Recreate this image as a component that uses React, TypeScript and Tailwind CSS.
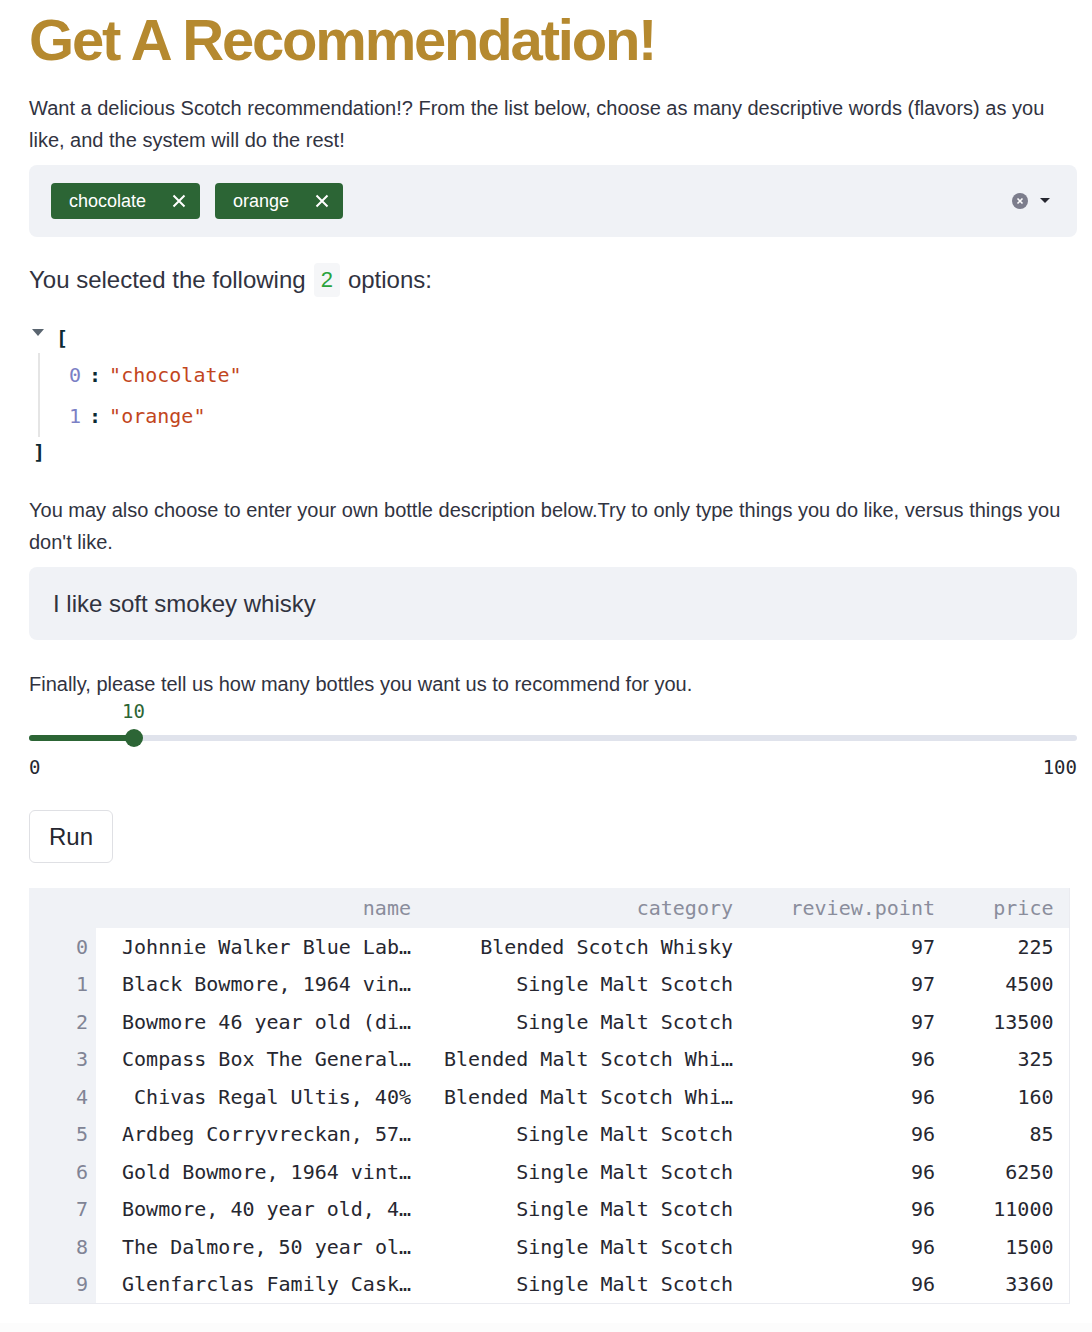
import React from "react";

const rows = [
  ["Johnnie Walker Blue Lab…", "Blended Scotch Whisky", "97", "225"],
  ["Black Bowmore, 1964 vin…", "Single Malt Scotch", "97", "4500"],
  ["Bowmore 46 year old (di…", "Single Malt Scotch", "97", "13500"],
  ["Compass Box The General…", "Blended Malt Scotch Whi…", "96", "325"],
  ["Chivas Regal Ultis, 40%", "Blended Malt Scotch Whi…", "96", "160"],
  ["Ardbeg Corryvreckan, 57…", "Single Malt Scotch", "96", "85"],
  ["Gold Bowmore, 1964 vint…", "Single Malt Scotch", "96", "6250"],
  ["Bowmore, 40 year old, 4…", "Single Malt Scotch", "96", "11000"],
  ["The Dalmore, 50 year ol…", "Single Malt Scotch", "96", "1500"],
  ["Glenfarclas Family Cask…", "Single Malt Scotch", "96", "3360"],
];

const sans = "font-['Liberation_Sans',Arial,sans-serif]";
const mono = "font-['DejaVu_Sans_Mono',monospace]";

function Tag({ label }: { label: string }) {
  return (
    <div className="flex items-center h-[36px] pl-[18px] pr-[14px] rounded-[4px] bg-[#2c6535] text-white text-[18px]">
      <span>{label}</span>
      <svg width="14" height="14" viewBox="0 0 14 14" className="ml-[26px]">
        <path d="M1.5 1.5 L12.5 12.5 M12.5 1.5 L1.5 12.5" stroke="white" strokeWidth="2" />
      </svg>
    </div>
  );
}

export default function App() {
  return (
    <div className={`${sans} bg-white text-[#31333f] min-h-[1332px] flex flex-col`}>
      <div className="px-[29px] pr-[15px] flex-1">
        <h1 className="font-bold text-[#b5892f] text-[58px] leading-none pt-[11px] tracking-[-2.2px]">
          Get A Recommendation!
        </h1>

        <p className="text-[20px] leading-[32px] mt-[23px]">
          Want a delicious Scotch recommendation!? From the list below, choose as many descriptive words (flavors) as you
          like, and the system will do the rest!
        </p>

        <div className="mt-[9px] h-[72px] rounded-[8px] bg-[#f0f2f6] flex items-center pl-[22px] pr-[26px]">
          <div className="flex gap-[15px]">
            <Tag label="chocolate" />
            <Tag label="orange" />
          </div>
          <div className="ml-auto flex items-center gap-[11px]">
            <svg width="16" height="16" viewBox="0 0 16 16">
              <circle cx="8" cy="8" r="8" fill="#7c7d8c" />
              <path d="M5.5 5.5 L10.5 10.5 M10.5 5.5 L5.5 10.5" stroke="white" strokeWidth="1.6" />
            </svg>
            <svg width="12" height="8" viewBox="0 0 12 8">
              <path d="M1 1 L11 1 L6 6 Z" fill="#262730" />
            </svg>
          </div>
        </div>

        <div className="mt-[26px] text-[24px] leading-[34px] flex items-center">
          <span>You selected the following</span>
          <span className="mx-[8px] px-[7px] rounded-[4px] bg-[#f5f6f8] text-[#2aa33d] text-[22px]">2</span>
          <span>options:</span>
        </div>

        <div className={`${mono} text-[20px] mt-[26px]`}>
          <div className="flex items-center h-[30px]">
            <svg width="14" height="10" viewBox="0 0 14 10" className="ml-[2px] -mt-[10px]">
              <path d="M1 1 L13 1 L7 8 Z" fill="#5a6570" />
            </svg>
            <span className="ml-[11px] font-bold text-[#0b2a33]">[</span>
          </div>
          <div className="ml-[9px] border-l-[2px] border-[#e5e5e5] py-[1px]">
            <div className="pl-[29px] h-[41px] flex items-center">
              <span className="text-[#7b80c5]">0</span>
              <span className="text-[#0b2a33] mx-[8px] font-bold">:</span>
              <span className="text-[#c2461d]">"chocolate"</span>
            </div>
            <div className="pl-[29px] h-[41px] flex items-center">
              <span className="text-[#7b80c5]">1</span>
              <span className="text-[#0b2a33] mx-[8px] font-bold">:</span>
              <span className="text-[#c2461d]">"orange"</span>
            </div>
          </div>
          <div className="h-[30px] flex items-center ml-[4px] font-bold text-[#0b2a33]">]</div>
        </div>

        <p className="text-[20px] leading-[32px] mt-[27px]">
          You may also choose to enter your own bottle description below.Try to only type things you do like, versus things you
          don't like.
        </p>

        <div className="mt-[9px] h-[73px] rounded-[8px] bg-[#f0f2f6] flex items-center pl-[24px] text-[24px]">
          I like soft smokey whisky
        </div>

        <p className="text-[20px] leading-[32px] mt-[28px]">
          Finally, please tell us how many bottles you want us to recommend for you.
        </p>

        <div className={`${mono} text-[19px]`}>
          <div className="relative h-[24px] mt-[3px]">
            <span className="absolute left-[93px] top-[-6px] text-[#2c6535]">10</span>
          </div>
          <div className="relative h-[10px] mt-[6px] flex items-center">
            <div className="w-full h-[6px] rounded-full bg-[#e0e3ec]" />
            <div className="absolute left-0 h-[6px] w-[105px] rounded-full bg-[#2c6535]" />
            <div className="absolute left-[96px] w-[18px] h-[18px] rounded-full bg-[#2c6535]" />
          </div>
          <div className="flex justify-between mt-[9px] text-[#262730] leading-[30px]">
            <span>0</span>
            <span>100</span>
          </div>
        </div>

        <button className="mt-[28px] w-[84px] h-[53px] rounded-[6px] border border-[#dfe0e4] bg-white text-[24px] text-[#262730]">
          Run
        </button>

        <table className={`${mono} mt-[25px] text-[20px] w-[1040px] border-collapse border-r border-b border-[#eaebf0] table-fixed`}>
          <colgroup>
            <col className="w-[67px]" />
            <col className="w-[327px]" />
            <col className="w-[322px]" />
            <col className="w-[202px]" />
            <col className="w-[122px]" />
          </colgroup>
          <thead>
            <tr className="bg-[#f0f2f6] text-[#8a8d9c] h-[40px]">
              <th className="font-normal" />
              <th className="font-normal text-right pr-[12px]">name</th>
              <th className="font-normal text-right pr-[12px]">category</th>
              <th className="font-normal text-right pr-[12px]">review.point</th>
              <th className="font-normal text-right pr-[15px]">price</th>
            </tr>
          </thead>
          <tbody>
            {rows.map((r, i) => (
              <tr key={i} className="h-[37.5px] text-[#262730]">
                <td className="bg-[#f0f2f6] text-[#808495] text-right pr-[8px]">{i}</td>
                <td className="text-right pr-[12px] whitespace-pre">{r[0]}</td>
                <td className="text-right pr-[12px] whitespace-pre">{r[1]}</td>
                <td className="text-right pr-[12px]">{r[2]}</td>
                <td className="text-right pr-[15px]">{r[3]}</td>
              </tr>
            ))}
          </tbody>
        </table>
      </div>
      <div className="h-[11px] bg-[#fcfcfc] mt-[19px]" />
    </div>
  );
}
